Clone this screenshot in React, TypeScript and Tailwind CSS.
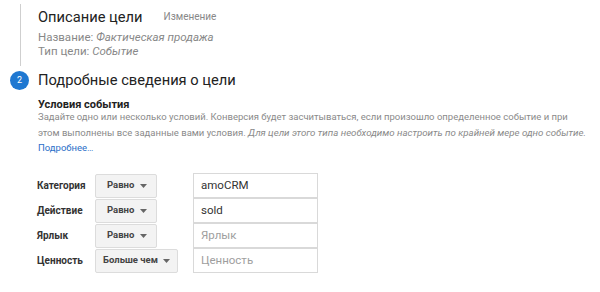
import React from 'react'

const font = { fontFamily: 'Roboto, "Noto Sans", sans-serif' }

function Dropdown({ label, wide }: { label: string; wide?: boolean }) {
  return (
    <div
      className={`flex h-[24px] items-center justify-between whitespace-nowrap rounded-[2px] border border-[#dcdcdc] bg-[#f3f3f3] text-[9.5px] font-bold text-[#444] ${
        wide ? 'w-[83px] pl-[7px] pr-[7px]' : 'w-[62px] pl-[11px] pr-[9px]'
      }`}
    >
      <span>{label}</span>
      <svg width="7" height="4" viewBox="0 0 7 4">
        <path d="M0 0h7L3.5 4z" fill="#666" />
      </svg>
    </div>
  )
}

function Row({ name, op, value, placeholder, wide }: { name: string; op: string; value?: string; placeholder: string; wide?: boolean }) {
  return (
    <div className="flex h-[24px] items-center">
      <div className="w-[58px] text-[10px] font-bold text-[#333]">{name}</div>
      <div className="w-[98px]">
        <Dropdown label={op} wide={wide} />
      </div>
      <div className="flex h-[25px] w-[125px] items-center border border-[#d9d9d9] px-[7px] text-[11.5px]">
        {value ? <span className="text-[#333]">{value}</span> : <span className="text-[#9e9e9e]">{placeholder}</span>}
      </div>
    </div>
  )
}

export default function App() {
  return (
    <div className="h-[292px] w-[600px] bg-white" style={font}>
      {/* Step 1 summary */}
      <div className="flex">
        <div className="w-[38px] pt-[4px]">
          <div className="ml-[20px] h-[62px] w-px bg-[#cfcfcf]" />
        </div>
        <div className="pt-[7px] pb-[12px]">
          <div className="flex items-center leading-[20px]">
            <span className="text-[14.7px] text-[#222]">Описание цели</span>
            <span className="ml-[21px] text-[10px] text-[#888]">Изменение</span>
          </div>
          <div className="mt-[3px] text-[11.5px] leading-[14px] text-[#888]">
            <div>
              Название: <i>Фактическая продажа</i>
            </div>
            <div>
              Тип цели: <i>Событие</i>
            </div>
          </div>
        </div>
      </div>

      {/* Step 2 */}
      <div className="flex">
        <div className="w-[38px] pt-[1px]">
          <div className="ml-[10px] flex h-[19px] w-[19px] items-center justify-center rounded-full bg-[#1f78d1] text-[9px] text-white">
            2
          </div>
        </div>
        <div>
          <div className="text-[14.7px] leading-[20px] text-[#222]">Подробные сведения о цели</div>
          <div className="mt-[8px] text-[11px] font-bold leading-[14px] text-[#222]">Условия события</div>
          <div className="mt-[-3px] whitespace-nowrap text-[9.5px] leading-[15.5px] text-[#8a8a8a]">
            Задайте одно или несколько условий. Конверсия будет засчитываться, если произошло определенное событие и при
            <br />
            этом выполнены все заданные вами условия.{' '}
            <i className="text-[9.7px]">Для цели этого типа необходимо настроить по крайней мере одно событие.</i>
            <br />
            <span className="text-[#2a6ec8]">Подробнее…</span>
          </div>
        </div>
      </div>

      {/* Conditions table */}
      <div className="ml-[37px] mt-[18px] flex flex-col gap-[1px]">
        <Row name="Категория" op="Равно" value="amoCRM" placeholder="Категория" />
        <Row name="Действие" op="Равно" value="sold" placeholder="Действие" />
        <Row name="Ярлык" op="Равно" placeholder="Ярлык" />
        <Row name="Ценность" op="Больше чем" placeholder="Ценность" wide />
      </div>
    </div>
  )
}
